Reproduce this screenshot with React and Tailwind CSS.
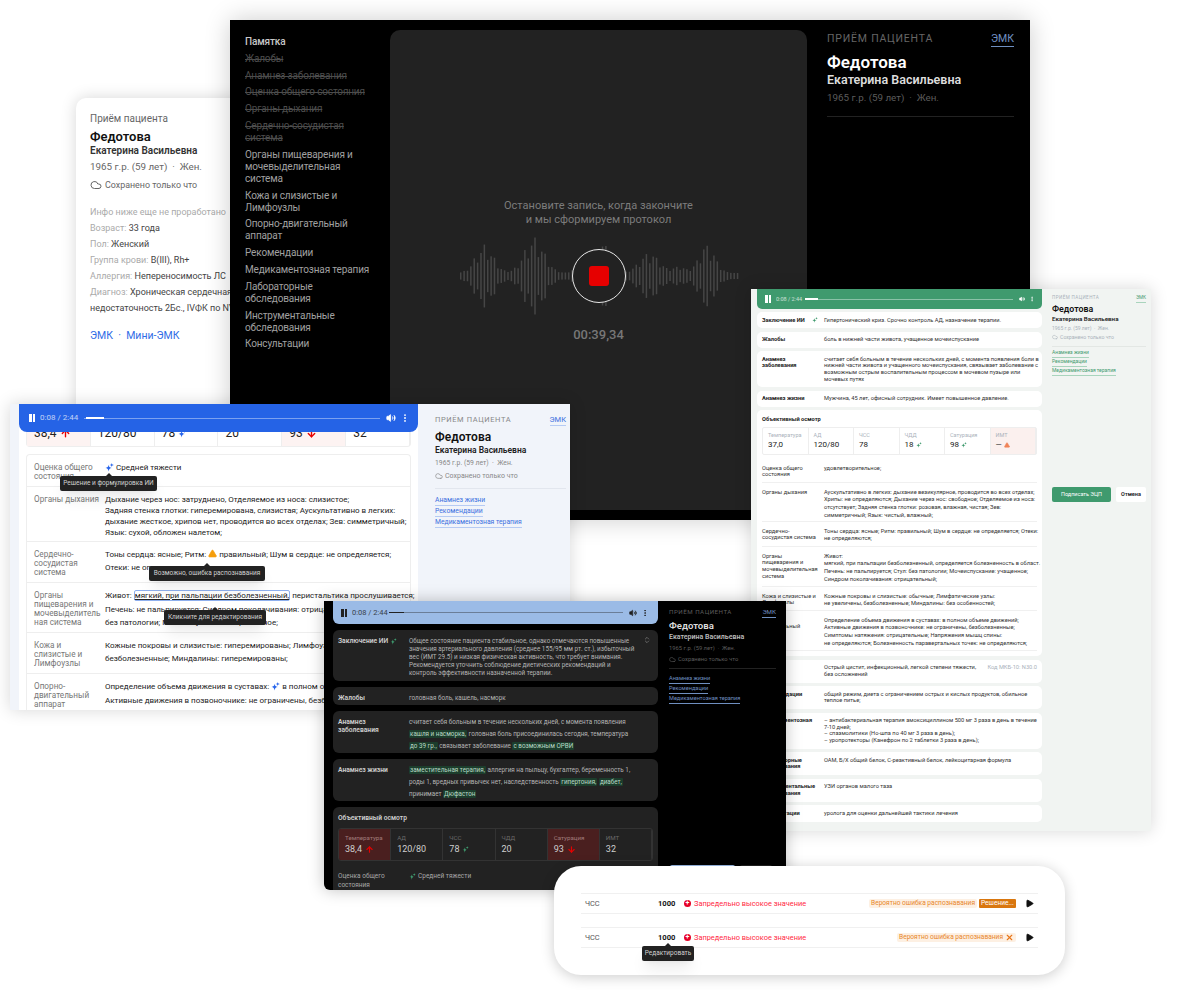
import { ArrowDown, ArrowUp, ChevronsUpDown, Cloud, EllipsisVertical, Play, TriangleAlert, Volume2, X } from 'lucide-react';

const Sparkle = ({ size = 10, color = '#2563eb', className = '' }) => (
  <svg width={size} height={size} viewBox="0 0 20 20" className={`inline-block shrink-0 ${className}`} fill={color}>
    <path d="M8 4 C9 9 10 10 15 11 C10 12 9 13 8 19 C7 13 6 12 1 11 C6 10 7 9 8 4Z" />
    <path d="M15 0 C15.5 3 16.5 4 20 4.500 C16.500 5 15.500 6 15 9 C14.500 6 13.500 5 10 4.500 C13.500 4 14.500 3 15 0Z" />
  </svg>
);

const Player = ({ bg, fg, track, className, text, icon, time = '0:08 / 2:44', bar = 'w-[19px]' }) => (
  <div className={`absolute top-0 left-0 right-0 flex items-center z-10 ${bg} ${fg} ${className}`}>
    <div className="flex gap-[1px] shrink-0">
      <span className={`w-[2.500px] h-[8px] ${track}`} />
      <span className={`w-[2.500px] h-[8px] ${track}`} />
    </div>
    <span className={`ml-[5px] whitespace-nowrap ${text}`}>{time}</span>
    <div className={`flex-1 mx-[6px] h-[1px] relative ${track} opacity-40`} />
    <span className={`absolute h-[1.500px] ${track} ${bar}`} />
    <Volume2 size={icon} fill="currentColor" strokeWidth={2} className="shrink-0" />
    <EllipsisVertical size={icon} strokeWidth={2.500} className="shrink-0 ml-[4px]" />
  </div>
);

const Tooltip = ({ text, className }) => (
  <div className={`absolute z-20 bg-[#222222] text-[#d0d0d0] text-[6.500px] h-[15px] flex items-center justify-center rounded-[2px] whitespace-nowrap shadow-lg ${className}`}>
    <span className="absolute left-1/2 -top-[3px] -ml-[3px] w-0 h-0 border-x-[3px] border-x-transparent border-b-[3px] border-b-[#222222]" />
    {text}
  </div>
);

const waveBars = Array.from({ length: 84 }, (_, i) => {
  const x = 2 + i * 3.400;
  const g = (c, w, h) => h * Math.exp(-((x - c) ** 2) / (2 * w * w));
  const env = g(26, 9, 60) + g(76, 10, 76) + g(145, 6, 68) + g(192, 10, 44) + g(250, 8, 62) + g(120, 5, 14) + g(222, 6, 14);
  const jitter = 0.72 + 0.28 * Math.sin(i * 2.100);
  return { x, h: Math.max(6, env * jitter + 6) };
});

const Waveform = () => (
  <svg width="282" height="84" viewBox="0 0 284 84" className="block">
    {waveBars.map((b) => (
      <rect key={b.x} x={b.x} y={42 - b.h / 2} width="1.500" height={b.h} fill="#464646" />
    ))}
  </svg>
);

const lines = (arr) => arr.map((l, i) => <div key={i} className="whitespace-nowrap">{l}</div>);

const navItems = [
  ['Памятка', 'text-[#c8c8c8] font-medium'],
  ['Жалобы', 'done'],
  ['Анамнез заболевания', 'done'],
  ['Оценка общего состояния', 'done'],
  ['Органы дыхания', 'done'],
  ['Сердечно-сосудистая\nсистема', 'done'],
  ['Органы пищеварения и\nмочевыделительная\nсистема', ''],
  ['Кожа и слизистые и\nЛимфоузлы', ''],
  ['Опорно-двигательный\nаппарат', ''],
  ['Рекомендации', ''],
  ['Медикаментозная терапия', ''],
  ['Лабораторные\nобследования', ''],
  ['Инструментальные\nобследования', ''],
  ['Консультации', ''],
];

const BackCard = () => (
  <div className="absolute left-[76px] top-[98px] w-[300px] h-[330px] bg-white rounded-[10px] shadow-[0_0_16px_rgba(0,0,0,0.16)] pl-[14px] pt-[14px] text-[#444]">
    <div className="text-[10px] leading-[13px] text-[#666]">Приём пациента</div>
    <div className="text-[13px] leading-[18px] mt-[3px] font-semibold text-[#111]">Федотова</div>
    <div className="text-[10px] leading-[12px] -mt-[1px] font-semibold text-[#333]">Екатерина Васильевна</div>
    <div className="text-[9.800px] leading-[14px] mt-[3px] text-[#666]">1965 г.р. (59 лет) &nbsp;·&nbsp; Жен.</div>
    <div className="flex items-center gap-[3px] mt-[4px] leading-[14px] text-[#666] text-[8.900px]">
      <Cloud size={12} /> Сохранено только что
    </div>
    <div className="mt-[12px] leading-[16px] text-[9px]">
      <div className="text-[#aaa]">Инфо ниже еще не проработано</div>
      <div><span className="text-[#aaa]">Возраст:</span> 33 года</div>
      <div><span className="text-[#aaa]">Пол:</span> Женский</div>
      <div><span className="text-[#aaa]">Группа крови:</span> B(III), Rh+</div>
      <div><span className="text-[#aaa]">Аллергия:</span> Непереносимость ЛС</div>
      <div><span className="text-[#aaa]">Диагноз:</span> Хроническая сердечная</div>
      <div>недостаточность 2Бс., IVФК по NYHA</div>
    </div>
    <div className="mt-[12px] text-[10.500px] leading-[16px] text-[#2f6be6]">ЭМК &nbsp;·&nbsp; Мини-ЭМК</div>
  </div>
);

const RecordWindow = () => (
  <div className="absolute left-[230px] top-[20px] w-[800px] h-[500px] bg-black flex shadow-[0_0_24px_rgba(0,0,0,0.2)]">
    <div className="w-[160px] shrink-0 pl-[15px] pt-[16px] flex flex-col gap-[4.800px] text-[10px] tracking-[-0.15px] leading-[12px] text-[#a0a0a0]">
      {navItems.map(([label, kind]) => (
        <div key={label} className={`whitespace-pre-line ${kind === 'done' ? 'line-through text-[#4c4c4c]' : kind}`}>{label}</div>
      ))}
    </div>
    <div className="w-[417px] shrink-0 my-[10px] bg-[#222222] rounded-[10px] flex flex-col items-center pt-[169px]">
      <div className="text-[11px] leading-[14px] text-[#7c7c7c] text-center">
        Остановите запись, когда закончите<br />и мы сформируем протокол
      </div>
      <div className="relative mt-[7px]">
        <Waveform />
        <div className="absolute left-1/2 top-1/2 -ml-[27px] -mt-[27px] w-[54px] h-[54px] rounded-full border-[1.500px] border-[#e8e8e8] bg-[#222222] flex items-center justify-center">
          <div className="w-[20px] h-[20px] rounded-[3px] bg-[#e60000]" />
        </div>
      </div>
      <div className="text-[13px] leading-[16px] mt-[9px] font-medium text-[#777]">00:39,34</div>
    </div>
    <div className="flex-1 pl-[20px] pr-[16px] pt-[12px]">
      <div className="flex justify-between items-start text-[10.500px] leading-[14px]">
        <span className="tracking-[0.8px] text-[#666]">ПРИЁМ ПАЦИЕНТА</span>
        <span className="text-[#6f8fc0] border-b border-[#6f8fc0]">ЭМК</span>
      </div>
      <div className="text-[17px] leading-[20px] mt-[5px] font-semibold text-white">Федотова</div>
      <div className="text-[12.500px] leading-[16px] font-semibold text-[#ddd]">Екатерина Васильевна</div>
      <div className="text-[9.800px] leading-[14px] mt-[3px] text-[#5c5c5c]">1965 г.р. (59 лет) &nbsp;·&nbsp; Жен.</div>
      <div className="h-px bg-[#222] mt-[11px]" />
    </div>
  </div>
);

const BlueRow = ({ label, h, children, border = true }) => (
  <div className={`grid grid-cols-[71px_1fr] px-[7px] pt-[8px] ${h} ${border ? 'border-b border-[#eeeeee]' : ''}`}>
    <div className="text-[8.200px] leading-[9px] text-[#777]">{label}</div>
    <div className="text-[8px] text-[#222]">{children}</div>
  </div>
);

const BlueVital = ({ value, red, icon }) => (
  <div className={`flex items-end gap-[3px] pl-[7px] pb-[6px] text-[12px] leading-[14px] text-[#222] border-r border-[#eeeeee] ${red ? 'bg-[#fdf3f2]' : ''}`}>
    {value}{icon}
  </div>
);

const BlueWindow = () => (
  <div className="absolute left-[10px] top-[404px] w-[560px] h-[306px] flex bg-[#f1f4fa] overflow-hidden shadow-[0_0_16px_rgba(0,0,0,0.16)]">
    <div className="relative ml-[9px] w-[399px] shrink-0 bg-white">
      <Player bg="bg-[#2563e6]" fg="text-white" track="bg-white" text="text-[8px] opacity-70" icon={10} className="h-[28px] pl-[10px] pr-[8px] rounded-b-[8px]" bar="left-[67px] w-[18px]" />
      <div className="mx-[7px] h-[43px] grid grid-cols-6 rounded-b-[4px] border border-t-0 border-[#eeeeee]">
        <BlueVital value="38,4" red icon={<ArrowUp size={11} strokeWidth={3} className="text-[#e60000] mb-[1px]" />} />
        <BlueVital value="120/80" />
        <BlueVital value="78" icon={<Sparkle size={9} className="mb-[2px]" />} />
        <BlueVital value="20" />
        <BlueVital value="93" red icon={<ArrowDown size={11} strokeWidth={3} className="text-[#e60000] mb-[1px]" />} />
        <BlueVital value="32" />
      </div>
      <div className="mx-[7px] mt-[7px] rounded-t-[4px] border border-[#eeeeee] border-b-0">
        <BlueRow label={<>Оценка общего<br />состояния</>} h="h-[32px]">
          <div className="flex items-center gap-[2px] leading-[9px]"><Sparkle size={9} /> Средней тяжести</div>
        </BlueRow>
        <BlueRow label="Органы дыхания" h="h-[55px]">
          <div className="leading-[11px] -mt-[1px]">
            {lines([
              'Дыхание через нос: затруднено, Отделяемое из носа: слизистое;',
              'Задняя стенка глотки: гиперемирована, слизистая; Аускультативно в легких:',
              'дыхание жесткое, хрипов нет, проводится во всех отделах; Зев: симметричный;',
              'Язык: сухой, обложен налетом;',
            ])}
          </div>
        </BlueRow>
        <BlueRow label={<>Сердечно-<br />сосудистая<br />система</>} h="h-[41px]">
          <div className="leading-[13px] -mt-[2px]">
            {lines([
              <>Тоны сердца: ясные; Ритм: <TriangleAlert size={9} className="inline -mt-[2px] text-[#f59e0b]" fill="#f59e0b" /> правильный; Шум в сердце: не определяется;</>,
              'Отеки: не определяются;',
            ])}
          </div>
        </BlueRow>
        <BlueRow label={<>Органы<br />пищеварения и<br />мочевыделитель<br />ная система</>} h="h-[50px]">
          <div className="leading-[13.500px] -mt-[2px]">
            {lines([
              <>Живот: <span className="border border-[#8fb0ee] rounded-[2px] underline">мягкий, при пальпации безболезненный,</span> перистальтика прослушивается;</>,
              'Печень: не пальпируется; Синдром поколачивания: отрицательный;',
              'без патологии; Мочеиспускание: нормальное;',
            ])}
          </div>
        </BlueRow>
        <BlueRow label={<>Кожа и<br />слизистые и<br />Лимфоузлы</>} h="h-[41px]">
          <div className="leading-[13px] -mt-[2px]">
            {lines([
              'Кожные покровы и слизистые: гиперемированы; Лимфоузлы: увеличены,',
              'безболезненные; Миндалины: гиперемированы;',
            ])}
          </div>
        </BlueRow>
        <BlueRow label={<>Опорно-<br />двигательный<br />аппарат</>} h="h-[60px]" border={false}>
          <div className="leading-[13.500px] -mt-[2px]">
            {lines([
              <>Определение объема движения в суставах: <Sparkle size={9} /> в полном объеме движений;</>,
              'Активные движения в позвоночнике: не ограничены, безболезненные;',
              'Симптомы натяжения: отрицательные',
            ])}
          </div>
        </BlueRow>
      </div>
    </div>
    <div className="flex-1 pl-[17px] pr-[4px] pt-[11px] text-[#888]">
      <div className="flex justify-between items-start text-[7.500px] leading-[10px]">
        <span className="tracking-[0.6px]">ПРИЁМ ПАЦИЕНТА</span>
        <span className="text-[#3b6fe0] border-b border-[#b6cbf4]">ЭМК</span>
      </div>
      <div className="text-[12px] leading-[14px] mt-[4px] font-semibold text-[#111]">Федотова</div>
      <div className="text-[8.500px] leading-[12px] font-semibold text-[#222]">Екатерина Васильевна</div>
      <div className="text-[6.800px] leading-[10px] mt-[2px]">1965 г.р. (59 лет) &nbsp;·&nbsp; Жен.</div>
      <div className="flex items-center gap-[2px] text-[7px] leading-[10px] mt-[3px]"><Cloud size={8} /> Сохранено только что</div>
      <div className="h-px bg-[#e2e6ee] mt-[7px]" />
      <div className="mt-[6px] flex flex-col items-start text-[6.800px] leading-[10px] text-[#3b6fe0]">
        <span className="border-b border-[#b6cbf4]">Анамнез жизни</span>
        <span className="border-b border-[#b6cbf4]">Рекомендации</span>
        <span className="border-b border-[#b6cbf4]">Медикаментозная терапия</span>
      </div>
    </div>
    <Tooltip text="Решение и формулировка ИИ" className="left-[50px] top-[72px] w-[97px]" />
    <Tooltip text="Возможно, ошибка распознавания" className="left-[139px] top-[162px] w-[116px]" />
    <Tooltip text="Кликните для редактирования" className="left-[154px] top-[206px] w-[102px]" />
  </div>
);

const GreenCard = ({ label, h, children }) => (
  <div className={`bg-white rounded-[5px] px-[5px] pt-[4.500px] grid grid-cols-[62px_1fr] text-[5.700px] leading-[6.700px] text-[#333] ${h}`}>
    <div className="font-bold text-[#222] whitespace-pre-line">{label}</div>
    <div>{children}</div>
  </div>
);

const GreenVital = ({ label, value, icon, red }) => (
  <div className={`pl-[5px] pt-[3px] border-r border-[#eeeeee] ${red ? 'bg-[#fbf0ee]' : ''}`}>
    <div className="text-[5.500px] leading-[8px] text-[#aab2bb]">{label}</div>
    <div className="text-[8px] leading-[10px] mt-[1px] text-[#222] flex items-center gap-[2px]">{value}{icon}</div>
  </div>
);

const GreenRow = ({ label, h, children, pad = 'pt-[6px]' }) => (
  <div className={`grid grid-cols-[62px_1fr] text-[5.700px] leading-[7.700px] text-[#333] border-b border-[#f0f0f0] ${pad} ${h}`}>
    <div className="pr-[2px] leading-[6.700px] whitespace-pre-line">{label}</div>
    <div>{children}</div>
  </div>
);

const GreenWindow = () => (
  <div className="absolute left-[751px] top-[289px] w-[400px] h-[542px] bg-[#f1f4f2] flex overflow-hidden shadow-[0_0_16px_rgba(0,0,0,0.16)]">
    <div className="relative ml-[6px] w-[285px] shrink-0 pt-[23px] flex flex-col gap-[3.500px]">
      <Player bg="bg-[#3f9a6e]" fg="text-white" track="bg-white" text="text-[5.500px] opacity-70" icon={6} className="h-[20px] pl-[8px] pr-[7px] rounded-b-[5px]" bar="left-[48px] w-[13px]" />
      <GreenCard label="Заключение ИИ" h="h-[16px]"><span className="flex items-center gap-0 whitespace-nowrap"><Sparkle size={6} color="#3f9a6e" className="-ml-[12px] mr-[6px]" />Гипертонический криз. Срочно контроль АД, назначение терапии.</span></GreenCard>
      <GreenCard label="Жалобы" h="h-[16px]">боль в нижней части живота, учащенное мочеиспускание</GreenCard>
      <GreenCard label={'Анамнез\nзаболевания'} h="h-[36px]">{lines(['считает себя больным в течение нескольких дней, с момента появления боли в', 'нижней части живота и учащенного мочеиспускания, связывает заболевание с', 'возможным острым воспалительным процессом в мочевом пузыре или', 'мочевых путях'])}</GreenCard>
      <GreenCard label="Анамнез жизни" h="h-[16px]"><div className="whitespace-nowrap">Мужчина, 45 лет, офисный сотрудник. Имеет повышенное давление.</div></GreenCard>
      <div className="bg-white rounded-[5px] px-[5px] pt-[5px] h-[246px]">
        <div className="font-bold text-[5.700px] leading-[8px] text-[#222]">Объективный осмотр</div>
        <div className="mt-[3.500px] grid grid-cols-6 h-[28px] border border-[#eeeeee] rounded-[2px]">
          <GreenVital label="Температура" value="37,0" />
          <GreenVital label="АД" value="120/80" />
          <GreenVital label="ЧСС" value="78" />
          <GreenVital label="ЧДД" value="18" icon={<Sparkle size={6} color="#3f9a6e" />} />
          <GreenVital label="Сатурация" value="98" icon={<Sparkle size={6} color="#3f9a6e" />} />
          <GreenVital label="ИМТ" value="—" red icon={<TriangleAlert size={6} className="text-[#f0855a]" fill="#f0855a" />} />
        </div>
        <GreenRow label={'Оценка общего\nсостояния'} h="h-[28px]" pad="pt-[10px]">удовлетворительное;</GreenRow>
        <GreenRow label="Органы дыхания" h="h-[39px]">{lines(['Аускультативно в легких: дыхание везикулярное, проводится во всех отделах;', 'Хрипы: не определяются; Дыхание через нос: свободное; Отделяемое из носа:', 'отсутствует; Задняя стенка глотки: розовая, влажная, чистая; Зев:', 'симметричный; Язык: чистый, влажный;'])}</GreenRow>
        <GreenRow label={'Сердечно-\nсосудистая система'} h="h-[25px]">{lines(['Тоны сердца: ясные; Ритм: правильный; Шум в сердце: не определяется; Отеки:', 'не определяются;'])}</GreenRow>
        <GreenRow label={'Органы\nпищеварения и\nмочевыделительная\nсистема'} h="h-[40px]">{lines(['Живот:', 'мягкий, при пальпации безболезненный, определяется болезненность в област.', 'Печень: не пальпируется; Стул: без патологии; Мочеиспускание: учащенное;', 'Синдром поколачивания: отрицательный;'])}</GreenRow>
        <GreenRow label={'Кожа и слизистые и\nЛимфоузлы'} h="h-[24px]">{lines(['Кожные покровы и слизистые: обычные; Лимфатические узлы:', 'не увеличены, безболезненные; Миндалины: без особенностей;'])}</GreenRow>
        <GreenRow label={'Опорно-\nдвигательный\nаппарат'} h="h-[40px]">{lines(['Определение объема движения в суставах: в полном объеме движений;', 'Активные движения в позвоночнике: не ограничены, безболезненные;', 'Симптомы натяжения: отрицательные; Напряжения мышц спины:', 'не определяются; Болезненность паравертальных точек: не определяются;'])}</GreenRow>
      </div>
      <GreenCard label="Диагноз" h="h-[23px]"><div className="flex justify-between whitespace-nowrap"><span>Острый цистит, инфекционный, легкой степени тяжести,<br />без осложнений</span><span className="text-[#aab2bb]">Код МКБ-10: N30.0</span></div></GreenCard>
      <GreenCard label="Рекомендации" h="h-[23px]">{lines(['общий режим, диета с ограничением острых и кислых продуктов, обильное', 'теплое питье;'])}</GreenCard>
      <GreenCard label={'Медикаментозная\nтерапия'} h="h-[36px]">{lines(['– антибактериальная терапия амоксициллином 500 мг 3 раза в день в течение', '7-10 дней;', '– спазмолитики (Но-шпа по 40 мг 3 раза в день);', '– уропротекторы (Канефрон по 2 таблетки 3 раза в день);'])}</GreenCard>
      <GreenCard label={'Лабораторные\nобследования'} h="h-[23px]"><div className="whitespace-nowrap">ОАМ, Б/Х общий белок, С-реактивный белок, лейкоцитарная формула</div></GreenCard>
      <GreenCard label={'Инструментальные\nобследования'} h="h-[23px]">УЗИ органов малого таза</GreenCard>
      <GreenCard label="Консультации" h="h-[17px]">уролога для оценки дальнейшей тактики лечения</GreenCard>
    </div>
    <div className="flex-1 pl-[10px] pr-[5px] pt-[5px] text-[#aab2bb] flex flex-col">
      <div className="flex justify-between items-start text-[4.600px] leading-[8px]">
        <span className="tracking-[0.4px]">ПРИЁМ ПАЦИЕНТА</span>
        <span className="text-[#3f9a6e] border-b border-[#a9d4bd]">ЭМК</span>
      </div>
      <div className="text-[8.800px] leading-[11px] mt-[1px] font-semibold text-[#111]">Федотова</div>
      <div className="text-[6.200px] leading-[8px] font-semibold text-[#222]">Екатерина Васильевна</div>
      <div className="text-[5px] leading-[8px] mt-[1px]">1965 г.р. (59 лет) &nbsp;·&nbsp; Жен.</div>
      <div className="flex items-center gap-[2px] text-[5.200px] leading-[8px] mt-[1px]"><Cloud size={6} /> Сохранено только что</div>
      <div className="h-px bg-[#e3e7e4] mt-[5px]" />
      <div className="mt-[2px] flex flex-col items-start gap-[0.500px] text-[5px] leading-[7.500px] text-[#3f9a6e]">
        <span className="border-b border-[#a9d4bd]">Анамнез жизни</span>
        <span className="border-b border-[#a9d4bd]">Рекомендации</span>
        <span className="border-b border-[#a9d4bd]">Медикаментозная терапия</span>
      </div>
      <div className="mt-[111px] flex gap-[5px]">
        <div className="w-[59px] h-[15px] bg-[#3f9a6e] rounded-[2px] text-white text-[5.500px] flex items-center justify-center">Подписать ЭЦП</div>
        <div className="w-[30px] h-[15px] bg-white rounded-[2px] text-[#222] font-semibold text-[5.500px] flex items-center justify-center">Отмена</div>
      </div>
    </div>
  </div>
);

const Hl = ({ children }) => <span className="bg-[#1c3d2c] text-[#b9d9c6] rounded-[1px] px-[1px]">{children}</span>;

const DarkCard = ({ label, h, children, leading = 'leading-[8px]' }) => (
  <div className={`bg-[#222222] rounded-[6px] px-[5px] pt-[7px] grid grid-cols-[71px_1fr] text-[6.300px] text-[#b4b4b4] ${leading} ${h}`}>
    <div className="font-semibold text-[6.700px] text-[#cfcfcf] leading-[8px] whitespace-nowrap">{label}</div>
    <div>{children}</div>
  </div>
);

const DarkVital = ({ label, value, icon, red }) => (
  <div className={`pl-[6px] pt-[5px] border-r border-[#333] ${red ? 'bg-[#4a1f1f]' : ''}`}>
    <div className={`text-[6.200px] leading-[9px] ${red ? 'text-[#a07a7a]' : 'text-[#6a6a6a]'}`}>{label}</div>
    <div className="text-[9px] leading-[12px] text-[#cfcfcf] flex items-center gap-[3px]">{value}{icon}</div>
  </div>
);

const DarkWindow = () => (
  <div className="absolute left-[324px] top-[601px] w-[462px] h-[289px] bg-black flex overflow-hidden rounded-b-[6px] shadow-[0_0_16px_rgba(0,0,0,0.25)]">
    <div className="relative ml-[9px] w-[325px] shrink-0 pt-[29px] flex flex-col gap-[6px]">
      <Player bg="bg-[#9bbbe6]" fg="text-[#222]" track="bg-[#222]" text="text-[7.500px] opacity-80" icon={8} className="h-[23px] pl-[8px] pr-[9px] rounded-b-[6px]" bar="left-[56px] w-[15px]" />
      <DarkCard label={<span className="flex items-center gap-[2px]">Заключение ИИ <Sparkle size={7} color="#3f9a6e" /></span>} h="h-[52px] relative">
        {lines(['Общее состояние пациента стабильное, однако отмечаются повышенные', 'значения артериального давления (среднее 155/95 мм рт. ст.), избыточный', 'вес (ИМТ 29.5) и низкая физическая активность, что требует внимания.', 'Рекомендуется уточнить соблюдение диетических рекомендаций и', 'контроль эффективности назначенной терапии.'])}
        <ChevronsUpDown size={8} className="absolute right-[7px] top-[6px] text-[#888]" />
      </DarkCard>
      <DarkCard label="Жалобы" h="h-[19px]">головная боль, кашель, насморк</DarkCard>
      <DarkCard label={<>Анамнез<br />заболевания</>} h="h-[43px]" leading="leading-[12px]">
        <div className="-mt-[2px]">{lines(['считает себя больным в течение нескольких дней, с момента появления', <><Hl>кашля и насморка,</Hl> головная боль присоединилась сегодня, температура</>, <><Hl>до 39 гр.,</Hl> связывает заболевание <Hl>с возможным ОРВИ</Hl></>])}</div>
      </DarkCard>
      <DarkCard label="Анамнез жизни" h="h-[43px]" leading="leading-[12px]">
        <div className="-mt-[2px]">{lines([<><Hl>заместительная терапия,</Hl> аллергия на пыльцу, бухгалтер, беременность 1,</>, <>роды 1, вредных привычек нет, наследственность <Hl>гипертония,</Hl> <Hl>диабет,</Hl></>, <>принимает <Hl>Дюфастон</Hl></>])}</div>
      </DarkCard>
      <div className="bg-[#222222] rounded-t-[6px] px-[5px] pt-[7px] flex-1">
        <div className="font-semibold text-[#cfcfcf] text-[6.700px] leading-[9px]">Объективный осмотр</div>
        <div className="mt-[5px] grid grid-cols-6 h-[33px] border border-[#333] rounded-[3px] overflow-hidden">
          <DarkVital label="Температура" value="38,4" red icon={<ArrowUp size={9} strokeWidth={3} className="text-[#e60000]" />} />
          <DarkVital label="АД" value="120/80" />
          <DarkVital label="ЧСС" value="78" icon={<Sparkle size={7} color="#3f9a6e" />} />
          <DarkVital label="ЧДД" value="20" />
          <DarkVital label="Сатурация" value="93" red icon={<ArrowDown size={9} strokeWidth={3} className="text-[#e60000]" />} />
          <DarkVital label="ИМТ" value="32" />
        </div>
        <div className="mt-[11px] grid grid-cols-[71px_1fr] text-[6.500px] leading-[9px] text-[#a8a8a8]">
          <div>Оценка общего<br />состояния</div>
          <div className="flex items-center gap-[2px] h-[9px]"><Sparkle size={7} color="#3f9a6e" /> Средней тяжести</div>
        </div>
      </div>
    </div>
    <div className="relative flex-1 pl-[11px] pr-[10px] pt-[7px] text-[#5c5c5c]">
      <div className="flex justify-between items-start text-[6.200px] leading-[9px]">
        <span className="tracking-[0.5px]">ПРИЁМ ПАЦИЕНТА</span>
        <span className="text-[#6f8fc0] border-b border-[#6f8fc0]">ЭМК</span>
      </div>
      <div className="text-[9.600px] leading-[12px] mt-[2px] font-semibold text-[#ddd]">Федотова</div>
      <div className="text-[7px] leading-[10px] font-semibold text-[#bbb]">Екатерина Васильевна</div>
      <div className="text-[5.800px] leading-[9px] mt-[2px]">1965 г.р. (59 лет) &nbsp;·&nbsp; Жен.</div>
      <div className="flex items-center gap-[2px] text-[5.800px] leading-[9px] mt-[2px]"><Cloud size={7} /> Сохранено только что</div>
      <div className="h-px bg-[#222] mt-[4px]" />
      <div className="mt-[5px] flex flex-col items-start gap-0 text-[5.600px] leading-[9px] text-[#6f8fc0]">
        <span className="border-b border-[#6f8fc0]">Анамнез жизни</span>
        <span className="border-b border-[#6f8fc0]">Рекомендации</span>
        <span className="border-b border-[#6f8fc0]">Медикаментозная терапия</span>
      </div>
      <div className="absolute left-[12px] top-[264px] w-[65px] h-[20px] bg-[#9bbbe6] rounded-[2px]" />
      <div className="absolute left-[82px] top-[264px] w-[32px] h-[20px] bg-[#222] rounded-[2px]" />
    </div>
  </div>
);

const AlertDot = () => (
  <span className="w-[7px] h-[7px] rounded-full bg-[#e60026] flex items-center justify-center text-white text-[7px] leading-none font-bold shrink-0">+</span>
);

const ErrorRow = ({ children }) => (
  <div className="h-[21px] border-y border-[#f0f0f0] flex items-center pl-[4px] pr-[4px] text-[7.400px]">
    <span className="w-[73px] text-[#555]">ЧСС</span>
    <span className="w-[26px] font-bold text-[#111] text-[7.600px]">1000</span>
    <AlertDot />
    <span className="ml-[3px] text-[#ff2a44]">Запредельно высокое значение</span>
    <div className="ml-auto flex items-center gap-[2px] text-[6.600px]">{children}</div>
    <Play size={9} fill="#111" className="ml-[9px] text-[#111]" />
  </div>
);

const RareWindow = () => (
  <div className="absolute left-[554px] top-[866px] w-[511px] h-[109px] bg-white rounded-[27px] shadow-[0_2px_14px_rgba(0,0,0,0.2)] pl-[27px] pr-[27px] pt-[27px]">
    <ErrorRow>
      <span className="bg-[#fdf0e3] text-[#e8862a] rounded-[2px] px-[2px] h-[9px] flex items-center">Вероятно ошибка распознавания</span>
      <span className="bg-[#d9770f] text-white rounded-[1px] px-[2px] h-[9px] w-[37px] flex items-center">Решение...</span>
    </ErrorRow>
    <div className="h-[13px]" />
    <ErrorRow>
      <span className="bg-[#fdf0e3] text-[#e8862a] rounded-[2px] px-[2px] h-[9px] flex items-center gap-[2px]">Вероятно ошибка распознавания <X size={9} strokeWidth={3} className="text-[#e8761a]" /></span>
    </ErrorRow>
    <Tooltip text="Редактировать" className="left-[88px] top-[80px] w-[52px]" />
  </div>
);

const App = () => (
  <div className="relative w-[1200px] h-[1000px] bg-white overflow-hidden [font-family:Roboto,sans-serif]">
    <BackCard />
    <RecordWindow />
    <BlueWindow />
    <GreenWindow />
    <DarkWindow />
    <RareWindow />
  </div>
);

export default App;
